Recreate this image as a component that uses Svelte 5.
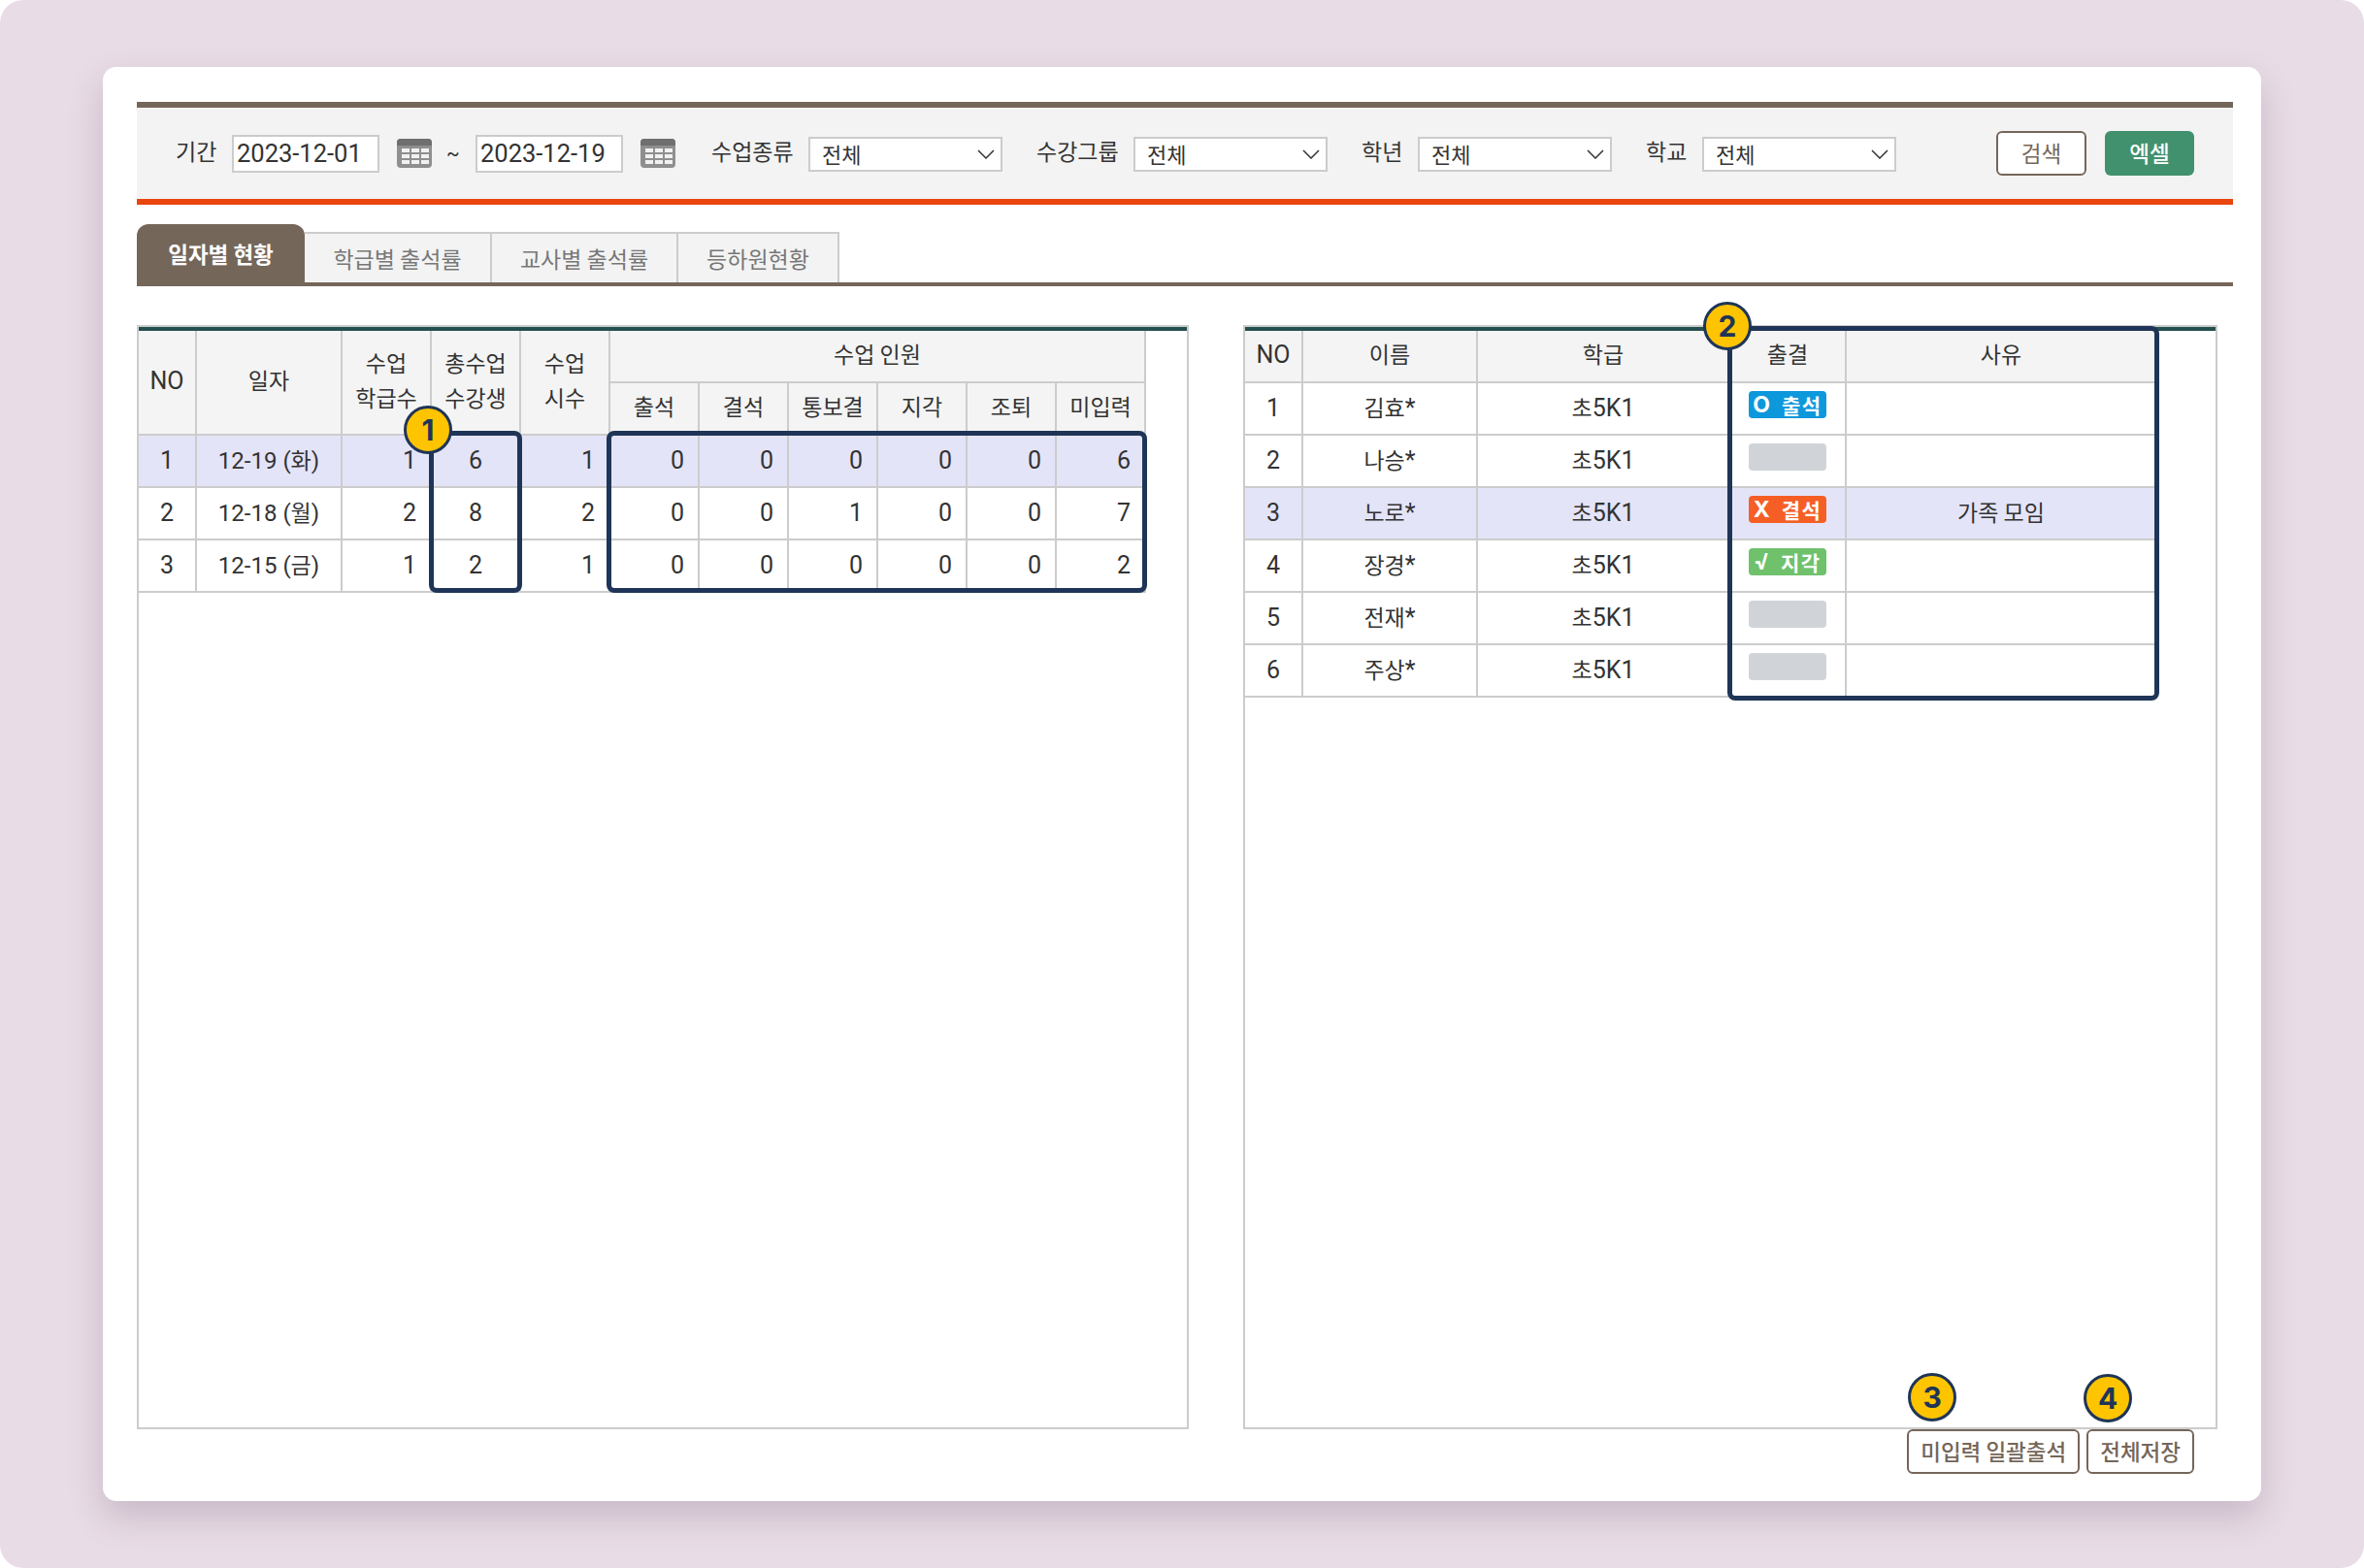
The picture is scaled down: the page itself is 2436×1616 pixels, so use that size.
<script>
  const filters = [
    { label: "수업종류", wide: true },
    { label: "수강그룹", wide: true },
    { label: "학년", wide: false },
    { label: "학교", wide: false },
  ];
  const tabs = ["일자별 현황", "학급별 출석률", "교사별 출석률", "등하원현황"];
  const subHeads = ["출석", "결석", "통보결", "지각", "조퇴", "미입력"];
  const days = [
    { no: 1, date: "12-19", day: "화", classes: 1, students: 6, hours: 1, counts: [0, 0, 0, 0, 0, 6], on: true },
    { no: 2, date: "12-18", day: "월", classes: 2, students: 8, hours: 2, counts: [0, 0, 1, 0, 0, 7] },
    { no: 3, date: "12-15", day: "금", classes: 1, students: 2, hours: 1, counts: [0, 0, 0, 0, 0, 2] },
  ];
  const students = [
    { no: 1, name: "김효", mark: "O", text: "출석", kind: "blue" },
    { no: 2, name: "나승", kind: "none" },
    { no: 3, name: "노로", mark: "X", text: "결석", kind: "orange", reason: "가족 모임", on: true },
    { no: 4, name: "장경", mark: "√", text: "지각", kind: "green" },
    { no: 5, name: "전재", kind: "none" },
    { no: 6, name: "주상", kind: "none" },
  ];
</script>

{#snippet calendar()}
  <svg class="cal" viewBox="0 0 36 30" width="36" height="30" aria-hidden="true">
    <rect width="36" height="30" rx="4" fill="#8f8f8f" />
    <path d="M0 7V4a4 4 0 0 1 4-4h28a4 4 0 0 1 4 4v3z" fill="#6f6f6f" />
    <g fill="#f1f1f1">
      {#each [10, 16, 22] as y}
        {#each [5, 15, 25] as x}
          <rect {x} {y} width="8" height="4" />
        {/each}
      {/each}
    </g>
  </svg>
{/snippet}

<div class="page">
  <div class="card">
    <div class="search">
      <span class="lbl">기간</span>
      <input class="date" value="2023-12-01" />
      {@render calendar()}
      <span class="tilde">~</span>
      <input class="date" value="2023-12-19" />
      {@render calendar()}
      {#each filters as f, i}
        <div class="field" class:first={i === 0}>
          <span class="lbl" class:wide={f.wide}>{f.label}</span>
          <div class="select">
            <span>전체</span>
            <svg viewBox="0 0 18 10" width="18" height="10" aria-hidden="true">
              <path d="M1 1l8 8 8-8" fill="none" stroke="#333" stroke-width="1.5" />
            </svg>
          </div>
        </div>
      {/each}
      <div class="actions">
        <button class="btn-search">검색</button>
        <button class="btn-excel">엑셀</button>
      </div>
    </div>

    <div class="tabs">
      {#each tabs as t, i}
        <div class="tab" class:active={i === 0}>{t}</div>
      {/each}
    </div>

    <div class="panels">
      <div class="panel left">
        <table>
          <colgroup>
            <col style="width:60px" /><col style="width:150px" />
            {#each Array(9) as _}<col style="width:92px" />{/each}
          </colgroup>
          <thead>
            <tr>
              <th rowspan="2" class="latin">NO</th>
              <th rowspan="2">일자</th>
              <th rowspan="2">수업<br />학급수</th>
              <th rowspan="2">총수업<br />수강생</th>
              <th rowspan="2">수업<br />시수</th>
              <th colspan="6">수업 인원</th>
            </tr>
            <tr>
              {#each subHeads as h}<th>{h}</th>{/each}
            </tr>
          </thead>
          <tbody>
            {#each days as d}
              <tr class:on={d.on}>
                <td class="c">{d.no}</td>
                <td class="c when">{d.date} (<span class="ko">{d.day}</span>)</td>
                <td class="r">{d.classes}</td>
                <td class="c">{d.students}</td>
                <td class="r">{d.hours}</td>
                {#each d.counts as n}<td class="r">{n}</td>{/each}
              </tr>
            {/each}
          </tbody>
        </table>
        <div class="mark m1"></div>
        <div class="mark m2"></div>
        <span class="badge b1">1</span>
      </div>

      <div class="panel right">
        <table>
          <colgroup>
            <col style="width:60px" /><col style="width:180px" /><col style="width:260px" />
            <col style="width:120px" /><col style="width:320px" />
          </colgroup>
          <thead>
            <tr>
              <th class="latin">NO</th><th>이름</th><th>학급</th><th>출결</th><th>사유</th>
            </tr>
          </thead>
          <tbody>
            {#each students as s}
              <tr class:on={s.on}>
                <td class="c">{s.no}</td>
                <td class="c"><span class="ko">{s.name}</span>*</td>
                <td class="c"><span class="ko">초</span>5K1</td>
                <td class="c chip-cell">
                  <span class="chip {s.kind}">
                    {#if s.mark}<b>{s.mark}</b><span>{s.text}</span>{/if}
                  </span>
                </td>
                <td class="c"><span class="ko">{s.reason ?? ""}</span></td>
              </tr>
            {/each}
          </tbody>
        </table>
        <div class="mark m3"></div>
        <span class="badge b2">2</span>
      </div>
    </div>

    <div class="bottom">
      <button class="line">미입력 일괄출석<span class="badge b3">3</span></button>
      <button class="line">전체저장<span class="badge b4">4</span></button>
    </div>
  </div>
</div>

<style>
  :global(body) {
    background: #fff;
  }

  .page {
    box-sizing: border-box;
    width: 2436px;
    height: 1616px;
    padding: 69px 106px;
    background: #e8dce6;
    border-radius: 24px;
    font-family: Roboto, "Noto Sans CJK KR", sans-serif;
    color: #333;
  }

  .card {
    box-sizing: border-box;
    height: 1478px;
    padding: 36px 29px 0 35px;
    background: #fff;
    border-radius: 14px;
    box-shadow: 0 16px 36px rgba(70, 45, 70, 0.2);
  }

  .search {
    display: flex;
    align-items: center;
    height: 94px;
    padding: 0 40px 0 40px;
    background: #f3f3f3;
    border-top: 6px solid #75665a;
    border-bottom: 6px solid #e8450f;
  }

  .lbl {
    width: 41px;
    font: 23px "Noto Sans CJK KR", sans-serif;
    white-space: nowrap;
    margin-top: -6px;
  }

  .lbl.wide {
    width: 83px;
  }

  .date {
    box-sizing: border-box;
    width: 152px;
    height: 39px;
    margin-left: 17px;
    padding: 0 0 0 3px;
    border: 2px solid #ccc;
    background: #fff;
    color: #333;
    font: 25.5px Roboto, sans-serif;
    outline: none;
  }

  .cal {
    margin-left: 18px;
  }

  .tilde {
    width: 12px;
    margin-left: 15px;
    margin-right: 1px;
    font: 20px Roboto, sans-serif;
  }

  .field {
    display: flex;
    align-items: center;
    gap: 17px;
    margin-left: 35px;
  }

  .field.first {
    margin-left: 37px;
  }

  .select {
    box-sizing: border-box;
    display: flex;
    align-items: center;
    justify-content: space-between;
    width: 200px;
    height: 36px;
    margin-top: 2px;
    padding: 0 6px 0 12px;
    border: 2px solid #ccc;
    background: #fff;
    font: 22px "Noto Sans CJK KR", sans-serif;
  }

  .select span {
    margin-top: -3px;
  }

  .actions {
    display: flex;
    gap: 19px;
    margin-left: auto;
  }

  button {
    box-sizing: border-box;
    font-family: "Noto Sans CJK KR", sans-serif;
    cursor: pointer;
  }

  .btn-search,
  .btn-excel {
    height: 46px;
    padding: 0 0 3px;
    border-radius: 6px;
    font-size: 22.5px;
  }

  .btn-search {
    width: 93px;
    background: #fff;
    border: 2px solid #75665a;
    color: #75665a;
  }

  .btn-excel {
    width: 92px;
    background: #42916e;
    border: 0;
    color: #fff;
    font-weight: 500;
  }

  .tabs {
    box-sizing: content-box;
    display: flex;
    align-items: flex-end;
    height: 80px;
    border-bottom: 4px solid #75665a;
  }

  .tab {
    box-sizing: border-box;
    display: flex;
    align-items: center;
    justify-content: center;
    width: 192px;
    height: 52px;
    background: #f3f3f3;
    border: 2px solid #ccc;
    border-left: 0;
    border-bottom: 0;
    color: #777;
    font: 23px "Noto Sans CJK KR", sans-serif;
  }

  .tab:nth-child(2) {
    width: 193px;
  }

  .tab:last-child {
    width: 166px;
  }

  .tab.active {
    width: 173px;
    height: 60px;
    padding-bottom: 0;
    background: #75665a;
    border: 0;
    border-radius: 12px 12px 0 0;
    color: #fff;
    font-weight: 700;
    font-size: 22.5px;
  }

  .panels {
    display: flex;
    gap: 56px;
    margin-top: 40px;
    padding-right: 16px;
  }

  .panel {
    position: relative;
    box-sizing: border-box;
    height: 1138px;
    border: 2px solid #ccc;
  }

  .panel.left {
    width: 1084px;
  }

  .panel.right {
    width: 1004px;
  }

  .panel table {
    table-layout: fixed;
    border-collapse: separate;
    border-spacing: 0;
  }

  .panel::before {
    content: "";
    display: block;
    height: 4px;
    background: #24504f;
  }

  th,
  td {
    box-sizing: border-box;
    height: 54px;
    padding: 0;
    border-right: 2px solid #ccc;
    border-bottom: 2px solid #ccc;
    font-weight: 400;
  }

  th {
    padding-bottom: 6px;
    background: #f4f4f4;
    font: 23px/36px "Noto Sans CJK KR", sans-serif;
  }

  th.latin {
    padding-bottom: 3px;
    font: 25px Roboto, sans-serif;
  }

  td {
    font-size: 25px;
    line-height: 26px;
  }

  td.when {
    font-size: 24px;
  }

  td .ko {
    font-family: "Noto Sans CJK KR", sans-serif;
    font-size: 23px;
    line-height: 1;
  }

  td.c {
    text-align: center;
  }

  td.r {
    text-align: right;
    padding-right: 14px;
  }

  tr.on td {
    background: #e4e4f8;
  }

  td.chip-cell {
    vertical-align: top;
    padding: 8px 0 0;
  }

  .chip {
    display: inline-flex;
    align-items: center;
    justify-content: center;
    gap: 12px;
    box-sizing: border-box;
    width: 80px;
    height: 28px;
    border-radius: 4px;
    color: #fff;
    font: 700 21px/26px "Noto Sans CJK KR", sans-serif;
    letter-spacing: 1.5px;
    vertical-align: top;
    white-space: nowrap;
  }

  .chip b {
    font: 700 23px/26px Inter, sans-serif;
    letter-spacing: 0;
  }

  .chip.blue {
    background: #0d98dc;
  }

  .chip.orange {
    background: #f55f26;
  }

  .chip.green {
    background: #6fc16c;
  }

  .chip.none {
    background: #d0d4d8;
  }

  .mark {
    position: absolute;
    box-sizing: border-box;
    border: 5px solid #1f3557;
    border-radius: 8px;
  }

  .m1 {
    left: 299px;
    top: 107px;
    width: 96px;
    height: 167px;
  }

  .m2 {
    left: 482px;
    top: 107px;
    width: 557px;
    height: 167px;
  }

  .m3 {
    left: 497px;
    top: -1px;
    width: 445px;
    height: 386px;
  }

  .badge {
    position: absolute;
    box-sizing: border-box;
    display: flex;
    align-items: center;
    justify-content: center;
    width: 50px;
    height: 50px;
    border: 3px solid #1f3557;
    border-radius: 50%;
    background: #ffc400;
    color: #1f3557;
    font: 700 30px Inter, sans-serif;
  }

  .b1 {
    left: 273px;
    top: 81px;
  }

  .b2 {
    left: 472px;
    top: -26px;
  }

  .b3 {
    left: -1px;
    top: -60px;
  }

  .b4 {
    left: -5px;
    top: -59px;
  }

  .bottom {
    display: flex;
    justify-content: flex-end;
    gap: 7px;
    padding-right: 40px;
  }

  .line {
    position: relative;
    height: 46px;
    padding: 0 12px 3px;
    background: #fff;
    border: 2px solid #75665a;
    border-radius: 6px;
    color: #75665a;
    font-size: 22.5px;
    font-weight: 500;
    white-space: nowrap;
  }
</style>
